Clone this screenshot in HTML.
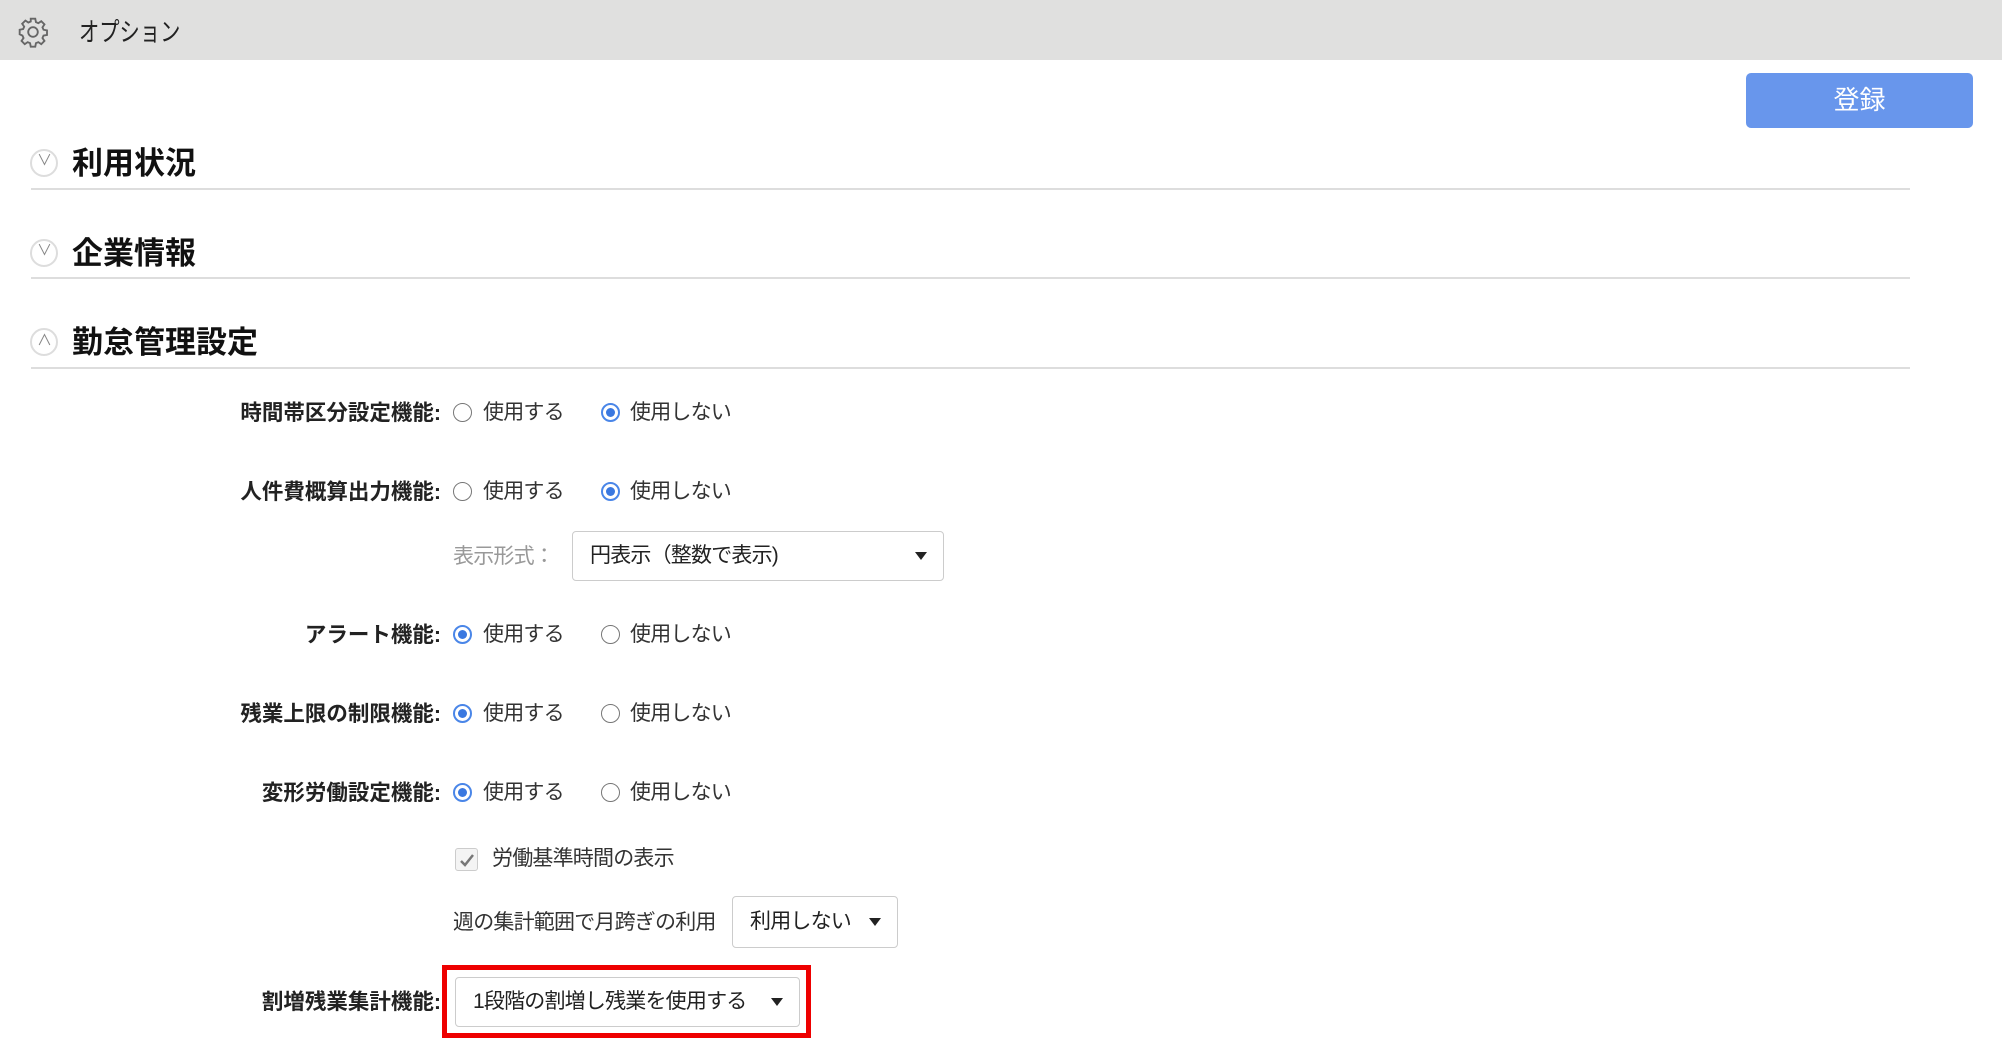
<!DOCTYPE html>
<html><head><meta charset="utf-8"><style>
*{margin:0;padding:0;box-sizing:border-box}
body{width:2002px;height:1046px;background:#fff;position:relative;overflow:hidden;font-family:"Liberation Sans","Noto Sans CJK JP",sans-serif;color:#222}
.a{position:absolute;white-space:nowrap}
.hdr{left:0;top:0;width:2002px;height:60px;background:#e0e0df}
.btn{left:1746px;top:73px;width:227px;height:55px;background:#6896ec;border-radius:5px;color:#fff;font-size:26px;text-align:center;line-height:55px}
.line{left:31px;width:1879px;height:2px;background:#ddd}
.sec{font-size:31px;font-weight:bold;color:#111;left:72px;line-height:36px}
.circ{width:28px;height:28px;border:2px solid #ddd;border-radius:50%;left:30px}
.lbl{font-size:21.5px;font-weight:bold;right:1561px;line-height:26px;color:#222}
.t{font-size:21px;letter-spacing:-0.8px;line-height:26px;color:#333}
.r{width:19px;height:19px;border:1.5px solid #777;border-radius:50%}
.r.on{border:2px solid #4a86e8}
.r.on::after{content:"";position:absolute;left:3px;top:3px;width:9px;height:9px;border-radius:50%;background:#3a78e0}
.sel{border:1.5px solid #ccc;border-radius:4px;font-size:21px;letter-spacing:-0.8px;color:#222;padding-left:17px}
.sel .ar{position:absolute;right:16px;top:50%;margin-top:-4px;border-left:6px solid transparent;border-right:6px solid transparent;border-top:8px solid #222}
</style></head><body>
<div class="a hdr"></div>
<svg class="a" style="left:17px;top:16px" width="32" height="32" viewBox="0 0 24 24" fill="none" stroke="#666" stroke-width="1.4"><path d="M10.3 2h3.4l.5 2.6 1.8.8 2.2-1.5 2.4 2.4-1.5 2.2.8 1.8 2.6.5v3.4l-2.6.5-.8 1.8 1.5 2.2-2.4 2.4-2.2-1.5-1.8.8-.5 2.6h-3.4l-.5-2.6-1.8-.8-2.2 1.5-2.4-2.4 1.5-2.2-.8-1.8L2 13.7v-3.4l2.6-.5.8-1.8-1.5-2.2 2.4-2.4 2.2 1.5 1.8-.8z"/><circle cx="12" cy="12" r="3.6"/></svg>
<div class="a" style="left:79px;top:16px;font-size:26px;line-height:32px;color:#222;transform:scaleX(0.78);transform-origin:left">オプション</div>
<div class="a btn">登録</div>

<div class="a circ" style="top:149px"></div><div class="a" style="left:37px;top:149px;font-size:15px;color:#888;width:14px;text-align:center">&#8744;</div>
<div class="a sec" style="top:146px">利用状況</div>
<div class="a line" style="top:188px"></div>
<div class="a circ" style="top:239px"></div><div class="a" style="left:37px;top:239px;font-size:15px;color:#888;width:14px;text-align:center">&#8744;</div>
<div class="a sec" style="top:236px">企業情報</div>
<div class="a line" style="top:277px"></div>
<div class="a circ" style="top:328px"></div><div class="a" style="left:37px;top:329px;font-size:15px;color:#888;width:14px;text-align:center">&#8743;</div>
<div class="a sec" style="top:325px">勤怠管理設定</div>
<div class="a line" style="top:367px"></div>

<div class="a lbl" style="top:400px">時間帯区分設定機能:</div>
<div class="a r" style="left:453px;top:403px"></div><div class="a t" style="left:483px;top:400px">使用する</div>
<div class="a r on" style="left:601px;top:403px"></div><div class="a t" style="left:630px;top:400px">使用しない</div>

<div class="a lbl" style="top:479px">人件費概算出力機能:</div>
<div class="a r" style="left:453px;top:482px"></div><div class="a t" style="left:483px;top:479px">使用する</div>
<div class="a r on" style="left:601px;top:482px"></div><div class="a t" style="left:630px;top:479px">使用しない</div>

<div class="a t" style="left:453px;top:544px;color:#999">表示形式：</div>
<div class="a sel" style="left:572px;top:531px;width:372px;height:50px;line-height:47px">円表示（整数で表示)<span class="ar"></span></div>

<div class="a lbl" style="top:622px">アラート機能:</div>
<div class="a r on" style="left:453px;top:625px"></div><div class="a t" style="left:483px;top:622px">使用する</div>
<div class="a r" style="left:601px;top:625px"></div><div class="a t" style="left:630px;top:622px">使用しない</div>

<div class="a lbl" style="top:701px">残業上限の制限機能:</div>
<div class="a r on" style="left:453px;top:704px"></div><div class="a t" style="left:483px;top:701px">使用する</div>
<div class="a r" style="left:601px;top:704px"></div><div class="a t" style="left:630px;top:701px">使用しない</div>

<div class="a lbl" style="top:780px">変形労働設定機能:</div>
<div class="a r on" style="left:453px;top:783px"></div><div class="a t" style="left:483px;top:780px">使用する</div>
<div class="a r" style="left:601px;top:783px"></div><div class="a t" style="left:630px;top:780px">使用しない</div>

<div class="a" style="left:455px;top:848px;width:23px;height:23px;border:1.5px solid #ccc;border-radius:3px;background:#f4f4f4"></div>
<svg class="a" style="left:458px;top:851px" width="18" height="18" viewBox="0 0 18 18"><path d="M3 10l4 4 8-10" stroke="#777" stroke-width="2.5" fill="none"/></svg>
<div class="a t" style="left:492px;top:846px">労働基準時間の表示</div>

<div class="a t" style="left:453px;top:910px">週の集計範囲で月跨ぎの利用</div>
<div class="a sel" style="left:732px;top:896px;width:166px;height:52px;line-height:49px">利用しない<span class="ar"></span></div>

<div class="a lbl" style="top:989px">割増残業集計機能:</div>
<div class="a" style="left:442px;top:965px;width:369px;height:73px;border:5px solid #e00"></div>
<div class="a sel" style="left:455px;top:977px;width:345px;height:50px;line-height:47px">1段階の割増し残業を使用する<span class="ar"></span></div>
</body></html>
